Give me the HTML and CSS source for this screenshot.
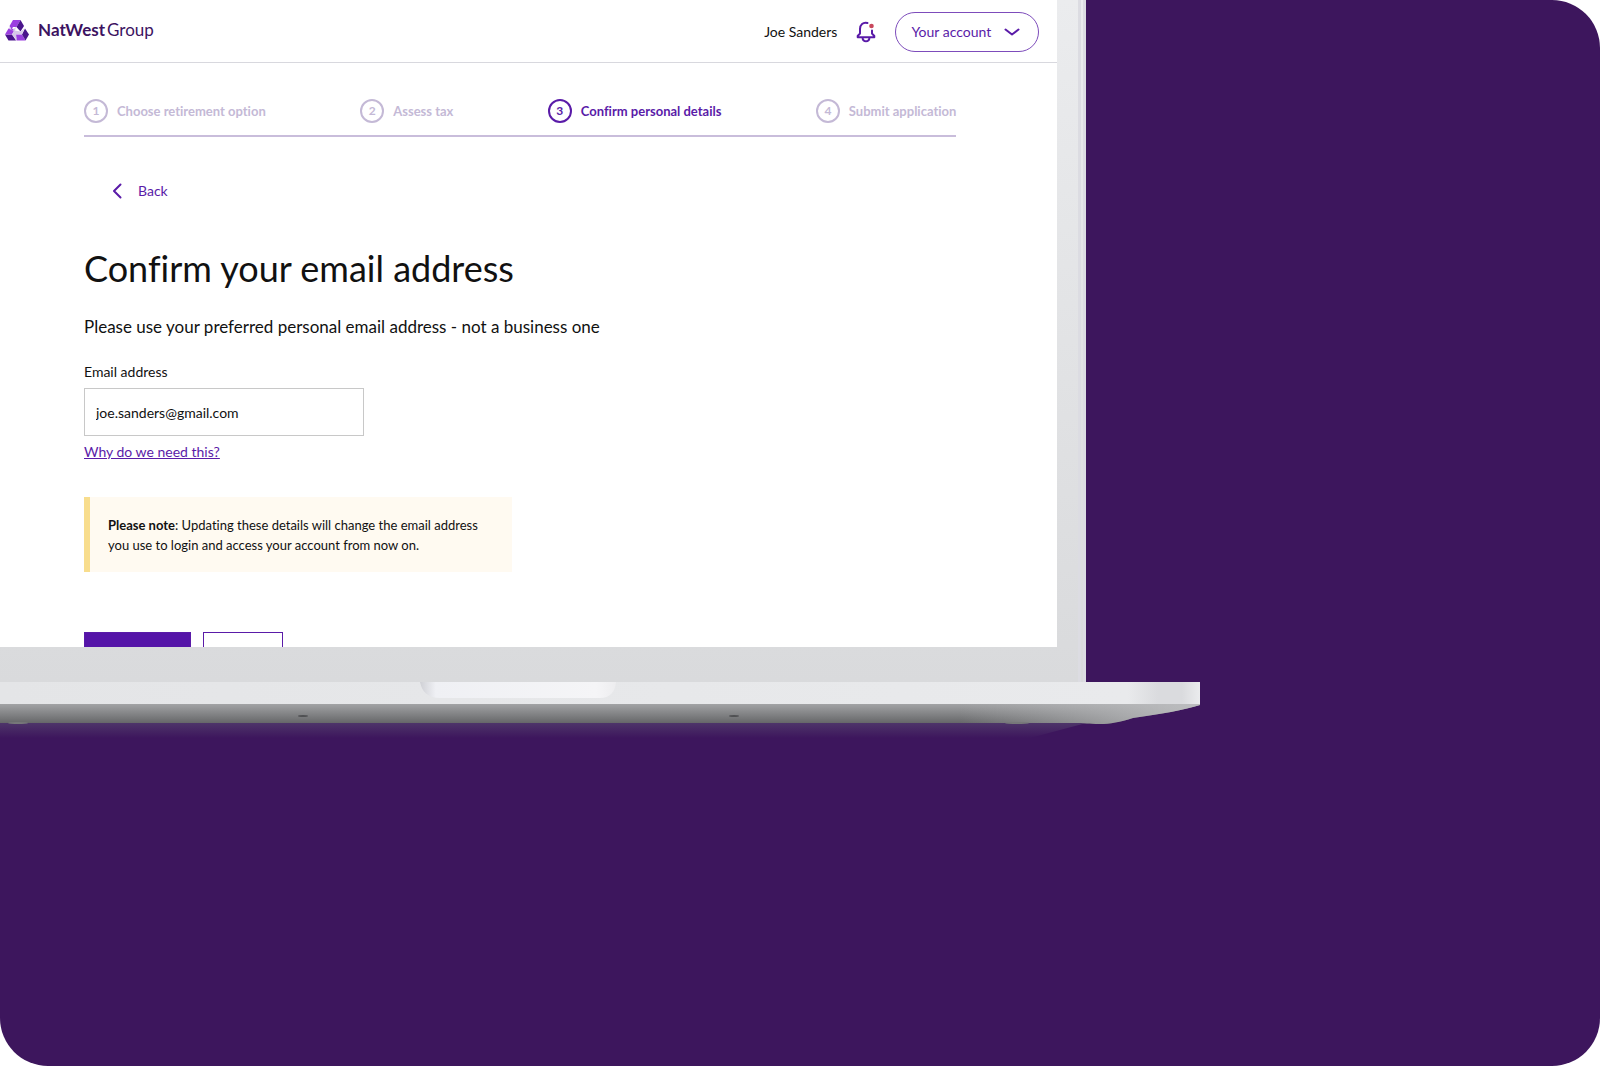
FILE: index.html
```html
<!DOCTYPE html>
<html lang="en">
<head>
	<meta charset="UTF-8">
	<meta name="viewport" content="width=device-width, initial-scale=1">
	<title>Confirm your email address - NatWest Group</title>
	<link rel="stylesheet" href="styles.css">
</head>
<body>
	<div class="stage">
		<div class="lid">
			<div class="screen">
				<header class="topbar">
					<a class="brand" href="#">
						<svg class="brand-mark" viewBox="0 0 24 21" aria-hidden="true">
							<path fill="#9b3fe0" d="M8 0h7.500l-4 7H8L6.500 9.500 4.500 6z"/>
							<path fill="#4a148c" d="M15.500 0 19 6l-3.500 5.500-4-4.500z"/>
							<path fill="#4a148c" d="M0 14.500h7l4 6H3.500z"/>
							<path fill="#9b3fe0" d="M0 14.500 3.500 8.500l6.500.5-3 5.500z"/>
							<path fill="#9b3fe0" d="M11 14.500h6l3.500 6h-9z"/>
							<path fill="#4a148c" d="M20 8.500 24 14.500l-3.500 6-3.500-6z"/>
							<path fill="#d6c8e8" d="M4.500 6 7 10.500 11 7l-1 3.500 5.500 1 4-3-2.500 5.500h-6L11.500 20 7 14.500l2-3.500-4.500-2z"/>
						</svg>
						<span class="brand-name"><b>NatWest</b><span>Group</span></span>
					</a>
					<div class="user">
						<span class="user-name">Joe Sanders</span>
						<button class="bell" type="button" aria-label="Notifications">
							<svg viewBox="0 0 20 22" aria-hidden="true">
								<path d="M11.500 2C7 .800 4 3.800 4 8v4.500L1.700 15v1.200h16.600V15L16 12.500V9.500M6.500 16.500c.3 5 6.700 5 7 0"/>
								<circle cx="15.500" cy="5" r="2.300"/>
							</svg>
						</button>
						<button class="account" type="button">
							Your account
							<svg viewBox="0 0 16 8" aria-hidden="true"><path d="M1.500 1.500 8 6.500l6.500-5"/></svg>
						</button>
					</div>
				</header>
				<main class="content">
					<ol class="steps">
						<li><span class="num">1</span>Choose retirement option</li>
						<li><span class="num">2</span>Assess tax</li>
						<li class="current" aria-current="step"><span class="num">3</span>Confirm personal details</li>
						<li><span class="num">4</span>Submit application</li>
					</ol>
					<a class="back" href="#">
						<svg viewBox="0 0 10 16" aria-hidden="true"><path d="M8.500 1.500 2 8l6.500 6.500"/></svg>
						Back
					</a>
					<h1>Confirm your email address</h1>
					<p class="intro">Please use your preferred personal email address - not a business one</p>
					<form>
						<label for="email">Email address</label>
						<input id="email" type="email" value="joe.sanders@gmail.com">
						<a class="why" href="#">Why do we need this?</a>
						<p class="note"><b>Please note</b>: Updating these details will change the email address you use to login and access your account from now on.</p>
						<div class="actions">
							<button class="primary" type="submit">Continue</button>
							<button class="secondary" type="button">Save</button>
							<a href="#">Trouble with your email address?</a>
						</div>
					</form>
				</main>
			</div>
		</div>
		<svg class="base" viewBox="0 0 1200 60" preserveAspectRatio="none" aria-hidden="true">
			<defs>
				<linearGradient id="deck">
					<stop offset="0" stop-color="#e4e5e7"/>
					<stop offset=".94" stop-color="#e9eaec"/>
					<stop offset=".965" stop-color="#dadbde"/>
					<stop offset=".985" stop-color="#dadbde"/>
					<stop offset="1" stop-color="#ebecee"/>
				</linearGradient>
				<linearGradient id="under" x2="0" y2="1">
					<stop offset="0" stop-color="#a5a6a8"/>
					<stop offset="1" stop-color="#636466"/>
				</linearGradient>
				<linearGradient id="edge">
					<stop offset=".8" stop-color="#bcbdbf" stop-opacity="0"/>
					<stop offset="1" stop-color="#bcbdbf"/>
				</linearGradient>
				<linearGradient id="shade" x2="0" y2="1">
					<stop offset="0" stop-color="#4f376a"/>
					<stop offset="1" stop-color="#3d165d"/>
				</linearGradient>
				<linearGradient id="notch">
					<stop offset="0" stop-color="#cfd0d5"/>
					<stop offset=".08" stop-color="#eff0f4"/>
					<stop offset=".9" stop-color="#f5f5f7"/>
					<stop offset="1" stop-color="#ededef"/>
				</linearGradient>
			</defs>
			<path fill="url(#shade)" d="M0 40h1090l-60 16H0z"/>
			<path fill="url(#under)" d="M0 21h1200v2c-15 5-40 9-67 13-13 4-23 6-33 6-12 0-15-1-25-1H0z"/>
			<path fill="url(#edge)" d="M0 21h1200v2c-15 5-40 9-67 13-13 4-23 6-33 6-12 0-15-1-25-1H0z"/>
			<path fill="url(#deck)" d="M0 0h1200v22H0z"/>
			<path fill="url(#notch)" d="M420 0h196c-1 10-6 16-16 16H440c-12 0-18-6-20-16z"/>
			<ellipse fill="#505153" cx="303" cy="34" rx="5" ry="1"/>
			<ellipse fill="#505153" cx="734" cy="34" rx="5" ry="1"/>
			<ellipse fill="#77787a" cx="18" cy="41" rx="10" ry="1"/>
			<ellipse fill="#77787a" cx="1017" cy="41" rx="12" ry="1"/>
		</svg>
	</div>
</body>
</html>
```

FILE: styles.css
```css
* { box-sizing: border-box; }
html, body { margin: 0; padding: 0; background: white; }
body, button, input { font-family: Lato, "Noto Sans", sans-serif; font-size: 14px; line-height: 20px; font-variant-ligatures: none; color: #111; }
button { cursor: pointer; }
a { color: #5a1ba8; }
svg { display: block; fill: none; }

.stage { min-height: 100vh; background: #3d165d; border-radius: 0 48px 48px 48px; overflow: hidden; }
.lid { width: 67.9%; padding: 0 21px 35px 0; background: linear-gradient(#ebecee, #d9dadc); border-right: 8px double #dcdce2; }
.screen { aspect-ratio: 1057 / 647; background: white; overflow: hidden; }
.base { width: 75%; height: 60px; }

.topbar { display: flex; justify-content: space-between; align-items: center; height: 63px; padding: 2px 18px 0 5px; border-bottom: 1px solid #d8d8de; }
.brand { display: flex; align-items: center; gap: 9px; padding-bottom: 4px; color: #3c1361; text-decoration: none; }
.brand-mark { width: 24px; height: 21px; }
.brand-name { display: flex; gap: 2px; font-size: 17px; line-height: 24px; }

.user { display: flex; align-items: center; gap: 19px; }
.bell { padding: 0; border: 0; background: none; }
.bell svg { width: 20px; height: 22px; }
.bell path { stroke: #5a1ba8; stroke-width: 2; stroke-linejoin: round; stroke-linecap: round; }
.bell circle { fill: #c8475c; }
.account { display: flex; align-items: center; justify-content: space-between; width: 144px; height: 40px; padding: 0 18px 0 15px; border: 1px solid #7d4cbb; border-radius: 20px; background: none; color: #5a1ba8; }
.account svg { width: 16px; height: 8px; }
.account path, .back path { stroke: #5a1ba8; stroke-width: 2; stroke-linecap: round; stroke-linejoin: round; }

.content { padding: 36px 101px 0 84px; }
.steps { display: flex; justify-content: space-between; margin: 0; padding: 0 0 12px; list-style: none; border-bottom: 2px solid #c9bddb; color: #c4b9d6; font-size: 13px; font-weight: bold; }
.steps li { display: flex; align-items: center; gap: 9px; }
.num { width: 24px; height: 24px; border: 2px solid; border-radius: 50%; font-size: 12px; text-align: center; }
.steps .current { color: #5a1ba8; }

.back { display: flex; align-items: center; gap: 16px; width: max-content; margin: 44px 0 0 28px; text-decoration: none; }
.back svg { width: 10px; height: 16px; }
h1 { margin: 43px 0 0; font-size: 36px; line-height: 48px; font-weight: normal; }
.intro { margin: 23px 0 0; font-size: 17px; line-height: 24px; }

label { display: block; margin: 23px 0 6px; }
input { display: block; width: 280px; height: 48px; padding: 0 11px; border: 1px solid #c8c8c8; border-radius: 0; background: white; }
.why { display: inline-block; margin-top: 6px; }
.note { width: 428px; margin: 35px 0 0; padding: 18px 24px 17px 18px; border-left: 6px solid #f8dd8d; background: #fffaf1; font-size: 13px; line-height: 20px; }

.actions { display: flex; align-items: center; gap: 12px; margin-top: 60px; }
.actions button { height: 42px; border: 1px solid #5a1ba8; }
.actions a { margin-left: auto; }
.primary { width: 107px; background: #5514a8; color: white; }
.secondary { width: 80px; background: white; color: #5a1ba8; }
```
